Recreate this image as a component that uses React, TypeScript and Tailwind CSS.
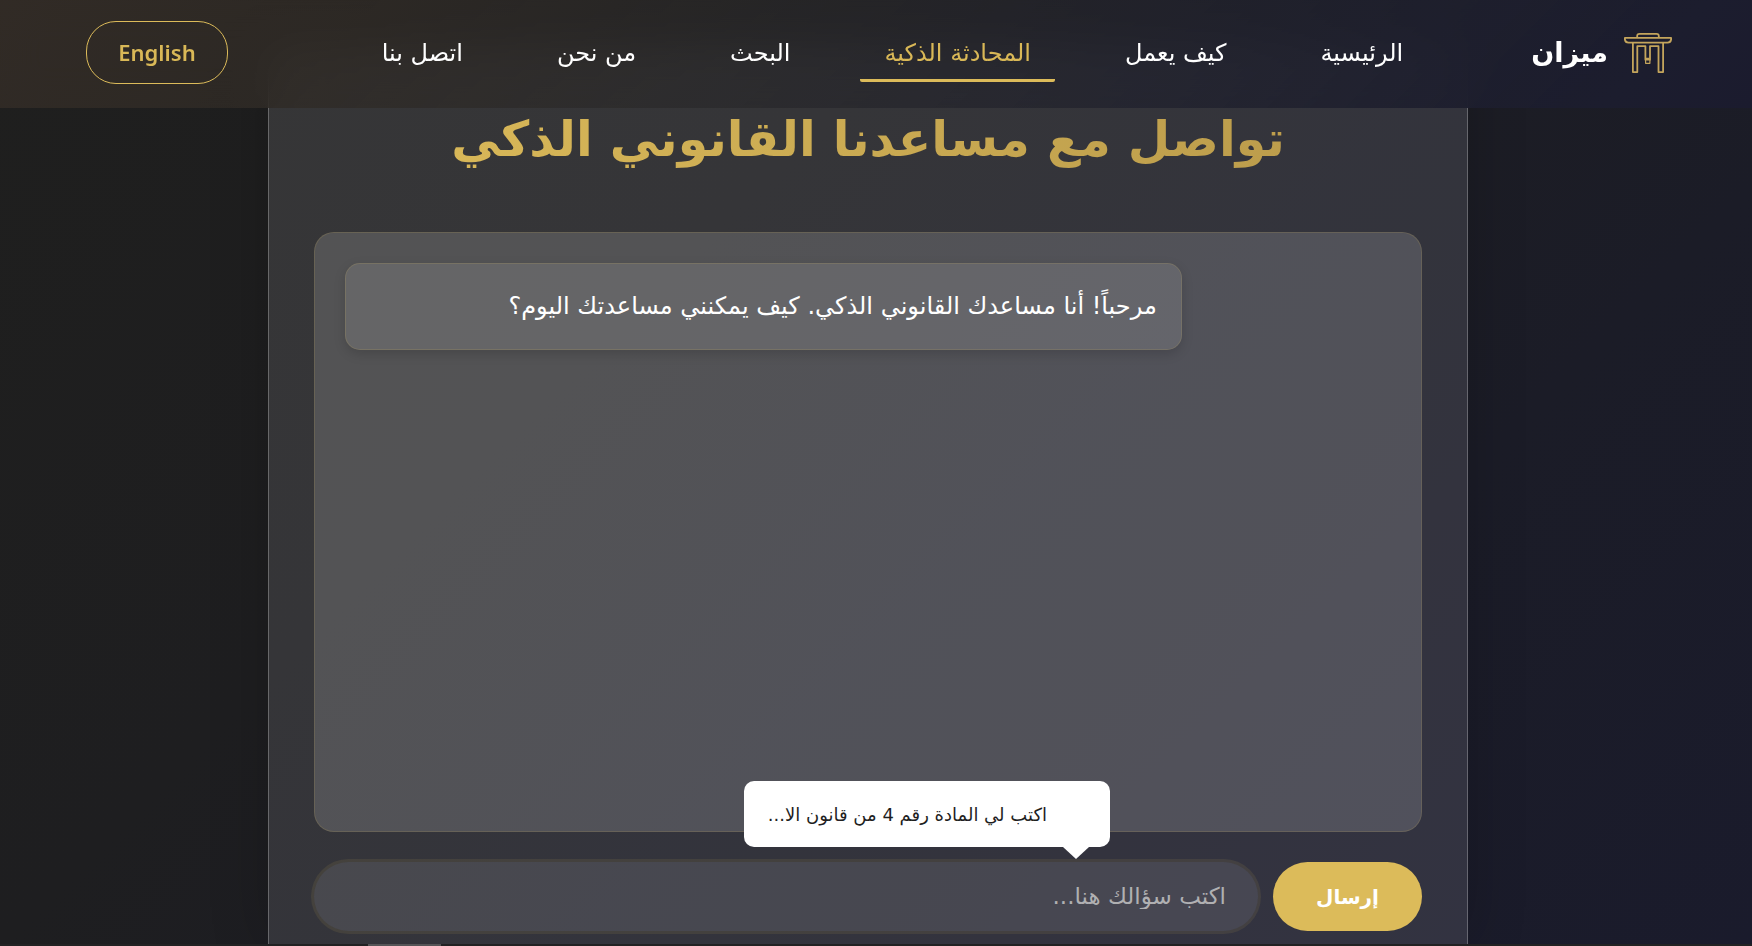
import React from "react";

const links = [
  { label: "الرئيسية", active: false },
  { label: "كيف يعمل", active: false },
  { label: "المحادثة الذكية", active: true },
  { label: "البحث", active: false },
  { label: "من نحن", active: false },
  { label: "اتصل بنا", active: false },
];

function Logo() {
  return (
    <svg width="48" height="40" viewBox="0 0 48 40" fill="none" stroke="#c4a55c" strokeWidth="1.8" strokeLinejoin="round" aria-hidden="true">
      <path d="M13.200 4.800V3Q13.200 0.900 15.500 0.900H32.500Q34.800 0.900 34.800 3V4.800" />
      <path d="M0.900 4.900H47.100V6.500Q46.600 9.600 43.500 9.600H4.500Q1.400 9.600 0.900 6.500Z" />
      <path d="M8.900 9.800V39.100H13.300V13.200H21.400V26.700H26V13.200H34.500V39.100H39.100V9.800" />
      <path d="M22 25.400H25.400M21.600 27V30.300H25.900V27" strokeWidth="1.2" />
    </svg>
  );
}

function Header() {
  return (
    <header className="relative z-20 h-[108px] bg-[linear-gradient(135deg,rgba(54,46,40,0.8)_0%,rgba(48,43,38,0.8)_20%,rgba(42,41,42,0.7)_42%,rgba(33,34,46,0.8)_68%,#1c1d2e_92%,#1b1b2e_100%)] backdrop-blur-[20px]">
      <div className="flex h-[105px] items-center pr-20 pl-[86px]">
        <a href="#home" className="flex items-center gap-4 text-white">
          <Logo />
          <span className="text-[27px] font-bold leading-10">ميزان</span>
        </a>
        <nav className="mr-[104px] flex items-center gap-[46px]">
          {links.map((l) => (
            <a
              key={l.label}
              href="#"
              className={
                l.active
                  ? "rounded-xs border-b-[3px] border-[#dcbb5a] px-6 pt-3 pb-2 text-[24px] leading-9 text-[#d9b857]"
                  : "rounded-xs border-b-[3px] border-transparent px-6 pt-3 pb-2 text-[24px] leading-9 text-white"
              }
            >
              {l.label}
            </a>
          ))}
        </nav>
        <button
          type="button"
          className="mr-auto h-[63px] w-[142px] rounded-[30px] border border-[#dcbb5a] font-['Noto_Sans',sans-serif] text-[22px] font-semibold text-[#d9b857]"
        >
          English
        </button>
      </div>
    </header>
  );
}

export default function App() {
  return (
    <div
      dir="rtl"
      className="relative flex h-screen flex-col overflow-hidden bg-[linear-gradient(135deg,#1f1f1e_0%,#1e1e20_35%,#1b1c27_72%,#1a1b2c_100%)] pr-4 font-['DejaVu_Sans',sans-serif]"
    >
      <div className="-mr-4">
        <Header />
      </div>
      <main className="mx-auto -mt-[62px] flex min-h-0 w-full max-w-[1200px] flex-1 flex-col rounded-t-[30px] border border-b-0 border-white/25 bg-[#fafaff]/11 px-[45px] pt-[59px] shadow-[0_0_60px_rgba(0,0,0,0.2)]">
        <h1 className="bg-[linear-gradient(270deg,#b8994a,#dcbb5a)] bg-clip-text text-center text-[49px] font-bold leading-[68px] text-transparent">
          تواصل مع مساعدنا القانوني الذكي
        </h1>
        <section className="mt-[58px] h-[600px] shrink-0 rounded-[20px] border border-[#dcbb5a]/15 bg-white/15 p-[30px]">
          <div className="mr-auto w-4/5 rounded-[15px] border border-[#dcbb5a]/15 bg-white/11 px-6 py-5 shadow-[0_4px_12px_rgba(0,0,0,0.15)]">
            <p className="text-[24px] leading-[45px] text-white">
              مرحباً! أنا مساعدك القانوني الذكي. كيف يمكنني مساعدتك اليوم؟
            </p>
          </div>
        </section>
        <form className="relative mt-[30px] mb-[13px] flex h-[69px] shrink-0 gap-[15px]" onSubmit={(e) => e.preventDefault()}>
          <button type="submit" className="w-[149px] rounded-full bg-[#dcbb5a] text-[20px] font-bold text-white">
            إرسال
          </button>
          <input
            type="text"
            aria-label="اكتب سؤالك هنا"
            placeholder="اكتب سؤالك هنا..."
            className="min-w-0 flex-1 rounded-full bg-white/10 px-8 text-[23px] text-white shadow-[0_0_0_3px_rgba(220,187,90,0.1)] outline-none placeholder:text-[#b0b0b2]"
          />
          <div className="absolute bottom-[84px] right-[312px] h-[66px] w-[366px] rounded-[10px] bg-white pr-[63px] text-[18px] leading-[68px] whitespace-nowrap text-[#1f1f1f]">
            اكتب لي المادة رقم 4 من قانون الا...
            <span className="absolute top-[66px] right-[21px] h-3 w-[26px] bg-white [clip-path:polygon(0_0,100%_0,50%_100%)]" />
          </div>
        </form>
      </main>
      <footer className="-mr-4 flex h-[2px] shrink-0 bg-[#222223]">
        <span className="mr-auto ml-[368px] w-[73px] bg-[#555557]" />
      </footer>
    </div>
  );
}
